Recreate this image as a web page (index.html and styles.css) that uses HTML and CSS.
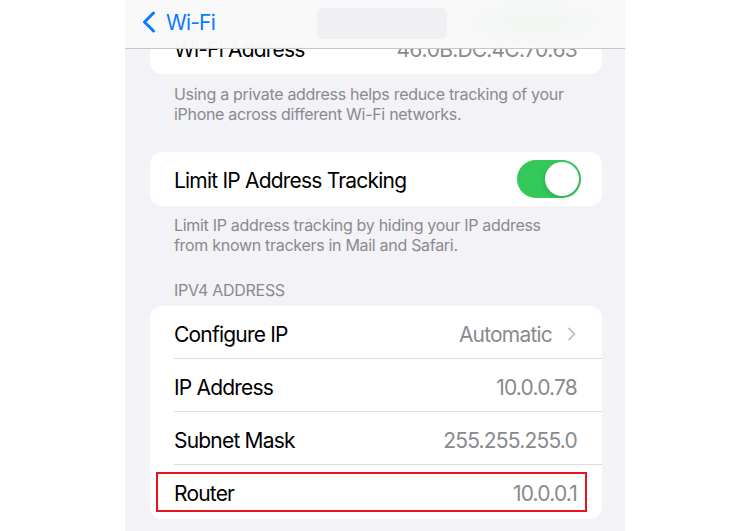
FILE: index.html
```html
<!DOCTYPE html>
<html lang="en">
<head>
    <meta charset="UTF-8">
    <meta name="viewport" content="width=device-width, initial-scale=1.0">
    <title>Wi-Fi</title>
    <link rel="stylesheet" href="styles.css">
</head>
<body>
<div class="phone">
    <div class="nav">
        <a href="#" class="back">
            <svg width="15" height="22" viewBox="0 0 15 22"><path d="M12.5 2 L3.5 11 L12.5 20" fill="none" stroke="#0a7aff" stroke-width="3" stroke-linecap="round" stroke-linejoin="round"/></svg>
            <span>Wi-Fi</span>
        </a>
        <div class="title_box"></div>
    </div>

    <div class="list">
        <div class="card">
            <div class="row"><span class="label">Wi-Fi Address</span><span class="value">46:0B:DC:4C:70:63</span></div>
        </div>
        <p class="note">Using a private address helps reduce tracking of your iPhone across different Wi-Fi networks.</p>

        <div class="card card_gap">
            <div class="row row_tall">
                <span class="label">Limit IP Address Tracking</span>
                <span class="switch on"><i></i></span>
            </div>
        </div>
        <p class="note note_tight">Limit IP address tracking by hiding your IP address from known trackers in Mail and Safari.</p>

        <h3 class="section">IPV4 ADDRESS</h3>
        <div class="card">
            <div class="row">
                <span class="label">Configure IP</span>
                <span class="value">Automatic</span>
                <svg class="more" width="10" height="14" viewBox="0 0 10 14"><path d="M2 1.5 L7.5 7 L2 12.5" fill="none" stroke="#c4c4c7" stroke-width="2" stroke-linecap="round" stroke-linejoin="round"/></svg>
            </div>
            <div class="row"><span class="label">IP Address</span><span class="value">10.0.0.78</span></div>
            <div class="row"><span class="label">Subnet Mask</span><span class="value">255.255.255.0</span></div>
            <div class="row row_last">
                <span class="label">Router</span><span class="value">10.0.0.1</span>
                <b class="mark"></b>
            </div>
        </div>
    </div>
</div>
</body>
</html>
```

FILE: styles.css
```css
*{
    margin: 0;
    padding: 0;
    box-sizing: border-box;
}
body{
    background: #fff;
    font-family: Inter, "Noto Sans", "Liberation Sans", sans-serif;
}
.phone{
    width: 500px;
    height: 531px;
    margin: 0 auto;
    background: #f2f2f7;
    position: relative;
    overflow: hidden;
}

/* top bar sits over the scrolled list */
.nav{
    position: absolute;
    left: 0;
    top: 0;
    right: 0;
    z-index: 5;
    height: 49px;
    display: flex;
    align-items: center;
    padding: 0 0 4px 16px;
    background: radial-gradient(90px 30px at 410px 22px, rgba(52,199,89,.04), transparent),
                rgba(249,249,249,.98);
    border-bottom: 1px solid #c6c6c8;
}
.nav .back{
    display: flex;
    align-items: center;
    text-decoration: none;
    color: #0a7aff;
    font-size: 21px;
    letter-spacing: -0.8px;
}
.nav .back svg{
    margin-right: 10px;
}
.nav .title_box{
    width: 130px;
    height: 31px;
    margin: 3px 0 0 102px;
    background: #efeff4;
    border-radius: 6px;
}

.list{
    padding: 21px 23px 0 25px;
}
.card{
    background: #fff;
    border-radius: 12px;
    overflow: hidden;
}
.card_gap{
    margin-top: 28px;
}
.row{
    height: 53px;
    display: flex;
    align-items: center;
    padding: 3px 25px 0 24px;
    position: relative;
    font-size: 21px;
    letter-spacing: -0.8px;
}
.row + .row:before{
    content: '';
    position: absolute;
    left: 24px;
    right: 0;
    top: -1px;
    height: 1px;
    background: #dcdcdf;
}
.row_tall,
.row_last{
    height: 54px;
}
.row .label{
    color: #000;
    flex: 1;
}
.row .value{
    color: #8a8a8e;
}
.row .more{
    margin: 0 0 0 15px;
}

/* green on/off switch */
.switch{
    width: 64px;
    height: 38px;
    border-radius: 19px;
    background: #e9e9eb;
    position: relative;
    margin: -3px -4px 0 0;
}
.switch.on{
    background: #34c759;
}
.switch i{
    position: absolute;
    top: 2px;
    left: 2px;
    width: 34px;
    height: 34px;
    border-radius: 50%;
    background: #fff;
    box-shadow: 0 2px 5px rgba(0,0,0,.15);
}
.switch.on i{
    left: 28px;
}

.note{
    padding: 10px 24px 0;
    font-size: 16px;
    line-height: 20px;
    color: #8a8a8e;
    letter-spacing: -0.3px;
}
.note_tight{
    padding-top: 9px;
}
.section{
    margin-top: 25px;
    margin-bottom: 6px;
    padding-left: 24px;
    font-size: 16px;
    line-height: 20px;
    font-weight: normal;
    color: #8a8a8e;
    letter-spacing: -0.3px;
}

/* red outline around the router row */
.mark{
    position: absolute;
    left: 6px;
    right: 15px;
    top: 7px;
    bottom: 7px;
    border: 2px solid #e8141b;
}
```
